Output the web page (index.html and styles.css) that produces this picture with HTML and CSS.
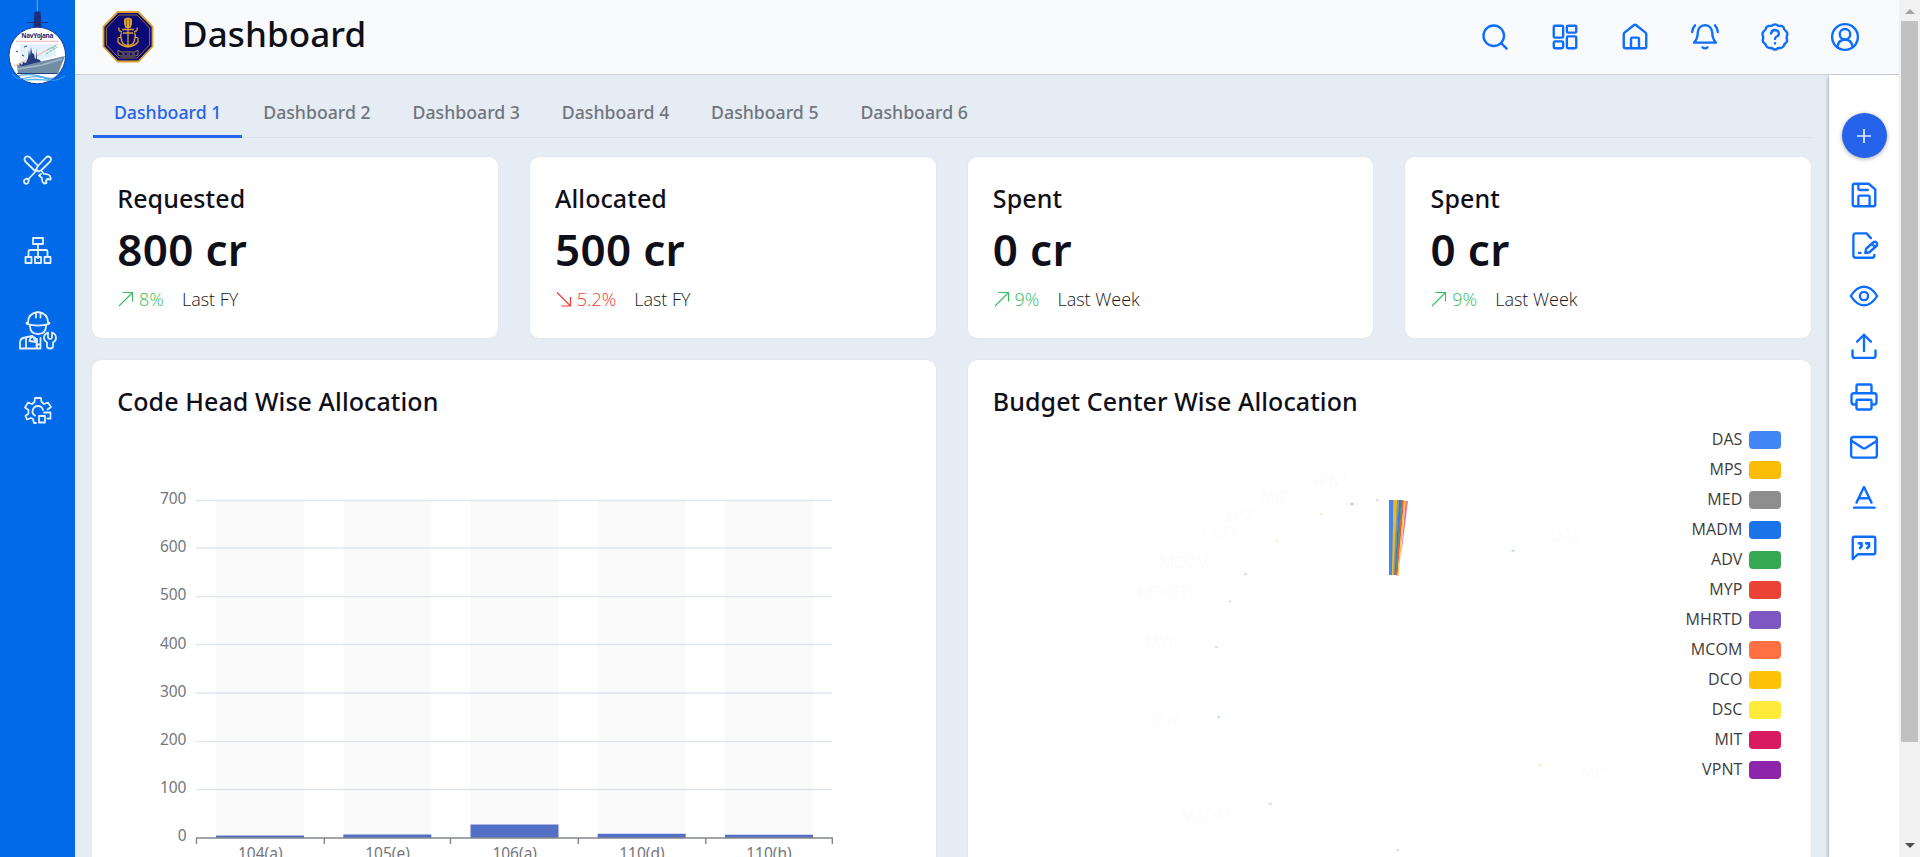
FILE: index.html
```html
<!DOCTYPE html>
<html lang="en">
<head>
<meta charset="utf-8">
<title>Dashboard</title>
<link rel="stylesheet" href="styles.css">
</head>
<body>
<div class="app">
  <aside class="sidebar">
    <svg class="brand" width="75" height="90" viewBox="0 0 75 90">
      <defs><clipPath id="disc"><circle cx="37.3" cy="55.5" r="28"/></clipPath></defs>
      <path d="M37.3 0v13" stroke="#7f9bc9" stroke-width="1"/>
      <path d="M35 12h5l1 15h-7zM27 22.5h21" fill="#1e2f7a" stroke="#1e2f7a" stroke-width="1"/>
      <circle cx="37.3" cy="55.5" r="28.3" fill="#fff" stroke="#1f3f96" stroke-width="1"/>
      <g clip-path="url(#disc)">
        <path d="M20 44h36v12l-36 10z" fill="#e2f1fb"/>
        <path d="M14 66L38 55 58 44" stroke="#f0b79a" fill="none"/>
        <path d="M46 54l11-7M47 50l9-4" stroke="#75cdb4" stroke-width="1.200" stroke-dasharray="3 1"/>
        <path d="M16 51l2 1M22 55l2 1M24 47l3-1" stroke="#315b9f" stroke-width="1.200"/>
        <path d="M18 68l2-5 2 2 1-3 3 1 2-5 1-8 1 6 1-9 1 6 2 1 1 5 1-1v-10l1 11 3 1 2 4-22 7z" fill="#243b7d"/>
        <path d="M17 65l6 1 20-5 22-5-7 18H18z" fill="#708da5"/>
        <path d="M18 69l24-4 20-6" stroke="#a5bac9" stroke-width="1.500" fill="none"/>
        <path d="M17 73.500h40" stroke="#243b7d" stroke-width="1.200"/>
        <path d="M14 77q15-5 28 0 12 4 22-3M18 81q16-3 36 0" stroke="#55aee9" stroke-width="1.500" fill="none"/>
      </g>
      <path d="M12 74q6 7 13 4 14-3 22 1 8 4 18-3" stroke="#3e9eee" fill="none"/>
      <text x="37.3" y="38.3" text-anchor="middle" textLength="32" class="brand-name">NavYojana</text>
      <path d="M16 41.3h43" stroke="#e99a9b" stroke-dasharray="2 .7"/>
    </svg>
    <nav class="side-nav">
      <svg width="30" height="30" viewBox="0 0 30 30"><path d="M12 16L2.300 6.500Q.5 4 2.500 2.200T7 2.400L15 11M15 11l8-8.500q2-1.800 4-.2t.2 4.200L18.500 15 15.500 16.500 13 14.500zM14 15L5 24.500M1.500 28q-1-2 0-3.300L4 23.500l2 1.700L5 28q-2 1.500-3.500 0zM18 19l-2 1.500 3 2.500q-.5 4 2 5.500l2.500-.5-.5-2.500 1.500-1.500 3 .5q.5-4-2.500-5t-4-.5L19 16.500"/></svg>
      <svg width="30" height="30" viewBox="0 0 30 30"><path d="M10 2h10v6H10zM15 8v14M5.500 21v-5.500q0-1.500 1.500-1.500h16q1.500 0 1.500 1.500V21M2.500 21h6v6h-6zM12 21h6v6h-6zM21.500 21h6v6h-6z"/></svg>
      <svg class="worker" width="40" height="40" viewBox="0 0 40 40"><path d="M10 12.500Q10 3.500 20 2q10 1.500 10 10.500M10 12q-3 1-.5 2.200Q20 17 30.500 14.200q2.500-1.200-.5-2.200M18 3V7.500M22.500 3V7.500M12 16q0 8 8 8t8-8M2 38.500V32Q2.500 28 7 27.500L14 26l4.500 3v9.500zM8 38.500V28M11.500 31q.5-3 3-5l3.500 6-6.500-1zM19 29v9.500h3.500v-4H19M22.500 28v7M30 22.500q-4.500 2-4 6 .5 2.500 3 4v4q0 2 3 2t3-2v-4q3-1.500 3-4.500 0-4-4-5.500v5q-.5 1.500-2 1.500t-2-1.500z"/></svg>
      <svg width="30" height="30" viewBox="0 0 30 30"><path d="M13 28h-2l-1-4-2-1-4 1.500L2.500 21l3-2.500v-3.500L2 12.500 5 7.500l4 1.500 2.500-2L12 3h6l.5 4 2.500 2L25 7.500l3 4.500-3.500 2.500M12 20.500q-3-1.500-2.500-4.500 1-5 5.500-5 4 0 5 4M16 21h6v6.500h-6zM21 17.500h6.500v6h-3"/></svg>
    </nav>
  </aside>
  <div class="main">
    <header class="header">
      <svg class="crest" width="52" height="52" viewBox="0 0 52 52">
        <path d="M15.700 1h20.600L50.500 15.500v20L36.300 50.500H15.700L1.500 35.500v-20z" fill="#0b0a76" stroke="#dba32c" stroke-width="1.800"/>
        <path d="M17 4h18l12.500 13v17L35 47H17L4.500 34V17z" fill="none" stroke="#ad8429" stroke-width=".8"/>
        <path d="M22 8q4-3 8 0v5l-1.500 4h-5L22 13z" fill="#d99f2b"/>
        <path d="M26 17v17M20 18.500h12M20 21q-4-1-3-4.500M32 21q4-1 3-4.500M16 27l3-1q0 8 7 8.500 7-.5 7-8.500l3 1M16 27v4q3 4 10 5 7-1 10-5v-4M20 22q-3 3 0 7M32 22q3 3 0 7M21 22h10" fill="none" stroke="#d99f2b" stroke-width="1.300"/>
        <path d="M24.500 8v7M27.500 8v7" stroke="#6b4a3a" stroke-width=".6"/>
        <path d="M16 39l3 2h14l3-2v5l-3 1H19l-3-1zM20 43h3M25 43h3M30 43h3" fill="none" stroke="#9c7838" stroke-width="1"/>
      </svg>
      <h1 class="title">Dashboard</h1>
      <div class="actions">
        <svg viewBox="0 0 24 24"><circle cx="11" cy="11" r="8.200"/><path d="M17 17l4.300 4.300"/></svg>
        <svg viewBox="0 0 24 24"><rect x="3" y="3" width="7.500" height="9.500" rx="1"/><rect x="13.500" y="3" width="7.500" height="5.500" rx="1"/><rect x="3" y="15.500" width="7.500" height="5.500" rx="1"/><rect x="13.500" y="11.500" width="7.500" height="9.500" rx="1"/></svg>
        <svg viewBox="0 0 24 24"><path d="M3 9.800q0-.8.600-1.300L11 2.600q1-.7 2 0l7.400 5.900q.6.500.6 1.300V19.500Q21 21 19.500 21h-15Q3 21 3 19.500zM8.800 21v-7.500q0-1 1-1h4.400q1 0 1 1V21"/></svg>
        <svg viewBox="0 0 24 24"><path d="M6.200 8.500Q6.700 3 12 2.500q5.300.5 5.800 6 0 4.500 2.900 8H3.300q2.900-3.500 2.900-8zM10 20.300q2 1.600 4 0M4 2.700Q2 4.800 1.800 8M20 2.700q2 2.100 2.200 5.300"/></svg>
        <svg viewBox="0 0 24 24"><path d="M12 1.900q1.600 0 2.600 1.200 1.500 0 3 .1 1.700.8 1.800 2.700.8 1 2 2.200 1 1.700 0 3.300-.3 1.200.2 2.600.4 1.900-1.400 3.100-1 1-1.400 2.400-1.200 1.500-3 1.300-1.300-.2-2.200.6Q12 22.800 10.400 21.400q-1-.7-2.300-.6-1.900.1-2.900-1.300-.5-1.400-1.500-2.400-1.800-1.200-1.400-3.100.5-1.400.1-2.600-.9-1.600.1-3.300 1.200-1.200 2-2.200.1-1.900 1.800-2.700 1.500-.1 3-.1Q10.400 1.900 12 1.900z"/><path d="M8.900 9.300q.2-2.800 3.100-2.900 3.100.3 3.100 2.900 0 1.600-1.700 2.300-1.400.6-1.400 1.900M12 17v.1"/></svg>
        <svg viewBox="0 0 24 24"><circle cx="12" cy="12" r="10.300"/><circle cx="12" cy="9.800" r="4.200"/><path d="M6 20q.5-5.800 6-6 5.500.2 6 6"/></svg>
      </div>
    </header>
    <div class="body">
      <main class="content">
        <nav class="tabs">
          <a class="tab tab-active">Dashboard 1</a><a class="tab">Dashboard 2</a><a class="tab">Dashboard 3</a><a class="tab">Dashboard 4</a><a class="tab">Dashboard 5</a><a class="tab">Dashboard 6</a>
        </nav>
        <section class="grid">
          <article class="card">
            <h2 class="card-title">Requested</h2><div class="value">800 cr</div>
            <div class="trend up"><svg viewBox="0 0 16 16"><path d="M1 15L14.500 1.500M4.500 1.500h10v9"/></svg><span class="pct">8%</span><span class="period">Last FY</span></div>
          </article>
          <article class="card">
            <h2 class="card-title">Allocated</h2><div class="value">500 cr</div>
            <div class="trend down"><svg viewBox="0 0 16 16"><path d="M1 1.500L14.500 15M5.500 15h9V6"/></svg><span class="pct">5.2%</span><span class="period">Last FY</span></div>
          </article>
          <article class="card">
            <h2 class="card-title">Spent</h2><div class="value">0 cr</div>
            <div class="trend up"><svg viewBox="0 0 16 16"><path d="M1 15L14.500 1.500M4.500 1.500h10v9"/></svg><span class="pct">9%</span><span class="period">Last Week</span></div>
          </article>
          <article class="card">
            <h2 class="card-title">Spent</h2><div class="value">0 cr</div>
            <div class="trend up"><svg viewBox="0 0 16 16"><path d="M1 15L14.500 1.500M4.500 1.500h10v9"/></svg><span class="pct">9%</span><span class="period">Last Week</span></div>
          </article>
          <article class="card panel">
            <h2 class="card-title">Code Head Wise Allocation</h2>
            <svg class="chart" width="791" height="440" viewBox="118 425 791 440">
              <path class="gridline" d="M196 500.500H832M196 548H832M196 596.700H832M196 644.500H832M196 693H832M196 741.700H832M196 789.500H832"/>
              <path class="band" d="M216 501h88v336h-88zM343.300 501h88v336h-88zM470.500 501h88v336h-88zM597.700 501h88v336h-88zM725 501h88v336h-88z"/>
              <path class="bar" d="M216 835.500h88v2.500h-88zM343.300 834.500h88v3.500h-88zM470.500 824.500h88V838h-88zM597.700 833.700h88v4.300h-88zM725 834.700h88v3.300h-88z"/>
              <path class="axis" d="M196 838H833M196.500 838v6M324.300 838v6M450.500 838v6M578.300 838v6M705.800 838v6M832.300 838v6"/>
              <g class="labels" text-anchor="end">
                <text x="186.500" y="504">700</text><text x="186.500" y="552">600</text><text x="186.500" y="600">500</text><text x="186.500" y="649">400</text><text x="186.500" y="697">300</text><text x="186.500" y="745">200</text><text x="186.500" y="793">100</text><text x="186.500" y="841">0</text>
              </g>
              <g class="labels" text-anchor="middle">
                <text x="260.300" y="859">104(a)</text><text x="387.500" y="859">105(e)</text><text x="514.700" y="859">106(a)</text><text x="641.900" y="859">110(d)</text><text x="769" y="859">110(h)</text>
              </g>
            </svg>
          </article>
          <article class="card panel">
            <h2 class="card-title">Budget Center Wise Allocation</h2>
            <div class="split">
              <svg class="pie" width="620" height="440" viewBox="993 425 620 440">
                <path d="M1389 500h5l-1.500 75h-3.500z" fill="#4285f4"/>
                <path d="M1393.500 500h4l-3 75h-2.500z" fill="#f5b915"/>
                <path d="M1397 500h2l-4 75h-1.500z" fill="#8e8e8e"/>
                <path d="M1399 500h2.500l-5.500 75h-1.500z" fill="#287fca"/>
                <path d="M1401 500h1.500l-6 75h-1.500z" fill="#48977b"/>
                <path d="M1402 500.500h2l-6.500 75h-1.500z" fill="#e35c3c"/>
                <path d="M1404 500.500h1.500l-7 75h-1z" fill="#ffc03a"/>
                <path d="M1405.500 501h2.500l-7.500 60z" fill="#dc7b9c"/>
                <g class="callouts">
                  <text x="1310" y="486">VPNT</text><text x="1260.500" y="503">MIT</text><text x="1227.500" y="521">DSC</text><text x="1202.600" y="538">DCO</text><text x="1160" y="568">MCOM</text><text x="1138.500" y="598">MHRTD</text><text x="1146" y="648">MYP</text><text x="1150" y="725">ADV</text><text x="1181" y="821">MADM</text><text x="1551" y="541">DAS</text><text x="1581" y="779">MPS</text>
                </g>
                <path d="M1511.500 550h3v1.500h-3zM1269 803h2.500v1.500h-2.500z" fill="#b5d2fa"/>
                <path d="M1538.500 764.500h2.500v1.500h-2.500zM1276 540h2v1.500h-2zM1320.500 513h2v1.500h-2z" fill="#fbdf9c"/>
                <path d="M1351 503h2v2h-2z" fill="#eb9ab8"/>
                <path d="M1376 499.500h2.500v1.500h-2.500z" fill="#dec3e6"/>
                <path d="M1244 573.500h3v1.500h-3zM1215 646.500h2.500v1.500h-2.500z" fill="#f9c3bd"/>
                <path d="M1229 600.500h2v1.500h-2zM1396.500 849.500h2.500v1.500h-2.500z" fill="#cfcfd6"/>
                <path d="M1218 716h1.500v2h-1.500z" fill="#a8dcc0"/>
              </svg>
              <ul class="legend">
                <li>DAS<i class="c1"></i></li><li>MPS<i class="c2"></i></li><li>MED<i class="c3"></i></li><li>MADM<i class="c4"></i></li><li>ADV<i class="c5"></i></li><li>MYP<i class="c6"></i></li><li>MHRTD<i class="c7"></i></li><li>MCOM<i class="c8"></i></li><li>DCO<i class="c9"></i></li><li>DSC<i class="c10"></i></li><li>MIT<i class="c11"></i></li><li>VPNT<i class="c12"></i></li>
              </ul>
            </div>
          </article>
        </section>
      </main>
      <aside class="tools">
        <button class="add"><svg viewBox="0 0 16 16"><path d="M8 1v14M1 8h14"/></svg></button>
        <div class="tool-list">
          <svg viewBox="0 0 24 24"><path d="M4.500 3h11.200L21 7.500v12q0 1.500-1.500 1.500h-15Q3 21 3 19.500v-15Q3 3 4.500 3zM7.500 3v4q0 1 1 1H15M7.500 21v-7.500q0-1 1-1h7q1 0 1 1V21"/></svg>
          <svg viewBox="0 0 24 24"><path d="M17.500 6.500L14 2.700H5.500Q3.500 2.700 3.500 4.700v15.500q0 2 2 2h13q1.800 0 1.800-1.800v-.4M8 18.300h1.200M13 18.500l.7-3.500 5.800-5.200q1.500-.8 2.500.3t.1 2.500L16.300 17.800zM18.300 11l2.400 2.500"/></svg>
          <svg viewBox="0 0 24 24"><path d="M1.500 12Q6 4.700 12 4.500q6 .2 10.500 7.500-4.500 7.300-10.500 7.500Q6 19.300 1.500 12z"/><circle cx="12" cy="12" r="3.300"/></svg>
          <svg viewBox="0 0 24 24"><path d="M12 16V3M6.500 8.500L12 3l5.500 5.500M2.800 15.500v4q0 2 2 2h14.400q2 0 2-2v-4"/></svg>
          <svg viewBox="0 0 24 24"><path d="M6 9V3q0-1 1-1h10q1 0 1 1v6M6 18H4q-2 0-2-2v-5q0-2 2-2h16q2 0 2 2v5q0 2-2 2h-2M7 14.200h10q1 0 1 1V21q0 1-1 1H7q-1 0-1-1v-5.800q0-1 1-1z"/></svg>
          <svg viewBox="0 0 24 24"><rect x="1.700" y="4" width="20.600" height="16.500" rx="2"/><path d="M2 7l9 5.800q1.200.6 2.400 0l9-5.800"/></svg>
          <svg viewBox="0 0 24 24"><path d="M6 16.500L12 4l6 12.500M8 13h8M4 20.500h16.500"/></svg>
          <svg viewBox="0 0 24 24"><path d="M3 21V4.500Q3 3 4.500 3h15Q21 3 21 4.500v11q0 1.500-1.500 1.500H7z"/><path d="M8 8.200h2v2.500L8.800 12M13.800 8.200h2.200v2.500L14.700 12" stroke-width="2.200"/></svg>
        </div>
      </aside>
    </div>
  </div>
  <div class="scrollbar"><b class="arrow-up"></b><div class="thumb"></div><b class="arrow-down"></b></div>
</div>
</body>
</html>
```
FILE: styles.css
```css
* { box-sizing: border-box; }
body { margin: 0; font-family: "Noto Sans", "Open Sans", sans-serif; color: #0f0f19; }
.app { display: flex; width: 1920px; height: 857px; overflow: hidden; background: #e5ecf4; }
svg { display: block; flex: none; }

.sidebar { width: 75px; background: #006ae8; flex: none; }
.brand-name { font: 700 6.4px "Noto Sans", sans-serif; fill: #18236e; }
.side-nav { display: flex; flex-direction: column; align-items: center; padding-top: 65px; gap: 50.500px; }
.side-nav svg { fill: none; stroke: #e6eefa; stroke-width: 1.800; stroke-linejoin: round; stroke-linecap: round; }
.side-nav .worker { margin: -6px 0 -6px; }

.main { flex: 1; display: flex; flex-direction: column; min-width: 0; }
.header { height: 75px; flex: none; display: flex; align-items: center; background: #f8fafc; border-bottom: 1px solid #ccd0d7; padding: 0 39px 0 27px; }
.title { margin: 0 auto 0 28px; font-size: 35px; font-weight: 500; line-height: 48px; letter-spacing: .1px; padding-bottom: 7px; }
.actions { display: flex; gap: 40px; }
.actions svg, .tool-list svg { width: 30px; height: 30px; fill: none; stroke: #0d6efd; stroke-width: 1.900; stroke-linecap: round; stroke-linejoin: round; }

.body { flex: 1; display: flex; min-height: 0; }
.content { flex: 1; min-width: 0; padding: 0 18px 0 17px; overflow: hidden; }
.tabs { display: flex; height: 63px; margin-left: 1px; border-bottom: 1px solid #dcdfe6; }
.tab { width: 149.300px; height: 63px; padding-top: 22px; text-align: center; font-size: 17.700px; line-height: 30px; font-weight: 500; color: #71757c; }
.tab-active { color: #2563eb; border-bottom: 3px solid #2563eb; border-radius: 2px 2px 0 0; }
.grid { display: grid; grid-template-columns: repeat(4, 1fr); column-gap: 32px; row-gap: 22px; padding-top: 19px; }
.card { min-width: 0; height: 181px; background: #fff; border-radius: 9px; padding: 25px 26px 25px 25.300px; box-shadow: 0 0 1px #c9ced6; }
.card-title { margin: 0; font-size: 25px; font-weight: 500; line-height: 32px; letter-spacing: .08px; }
.value { font-size: 44px; font-weight: 600; line-height: 60px; letter-spacing: .3px; margin-top: 5px; }
.trend { display: flex; align-items: center; height: 30px; margin: 5px 0 0 .8px; font: 350 18px/30px "Open Sans", sans-serif; }
.trend svg { width: 16px; height: 16px; margin-right: 5px; fill: none; stroke: currentColor; stroke-width: 1.100; }
.up { color: #35bb5c; }
.down { color: #f8342f; }
.period { margin-left: 18px; color: #181820; }
.panel { grid-column: span 2; height: 560px; }
.chart { margin: 8px 0 0 .7px; }
.gridline { stroke: #e0e6f1; stroke-width: 1.300; }
.band { fill: rgba(180, 180, 180, .07); }
.bar { fill: #5470c6; }
.axis { stroke: #83868f; stroke-width: 1.400; fill: none; }
.labels { font-size: 15.500px; fill: #74767e; }

.split { display: flex; justify-content: space-between; }
.pie { margin: 8px 0 0 .7px; }
.callouts { font: 300 16px "Open Sans", sans-serif; fill: #fbfbfb; }
.legend { list-style: none; margin: 7px 4px 0 0; padding: 0; font: 375 16px "Open Sans", sans-serif; letter-spacing: .1px; color: #3c3c3c; }
.legend li { display: flex; justify-content: flex-end; align-items: center; height: 30px; gap: 6.500px; }
.legend i { width: 32px; height: 18px; border-radius: 4px; position: relative; top: 1px; }
.c1 { background: #4285f4; }
.c2 { background: #fbbc05; }
.c3 { background: #8e8e8e; }
.c4 { background: #1a73e8; }
.c5 { background: #34a853; }
.c6 { background: #ea4335; }
.c7 { background: #7e57c2; }
.c8 { background: #ff7043; }
.c9 { background: #ffc107; }
.c10 { background: #ffeb3b; }
.c11 { background: #d81b60; }
.c12 { background: #8e24aa; }

.tools { width: 70px; flex: none; background: #fff; box-shadow: -1px 2px 3px rgba(70, 80, 100, .4); padding-top: 38px; display: flex; flex-direction: column; align-items: center; }
.add { width: 45px; height: 45px; flex: none; border: 0; border-radius: 50%; background: #2563eb; box-shadow: 0 1px 4px rgba(0, 0, 0, .35); display: flex; align-items: center; justify-content: center; padding: 0; }
.add svg { width: 16px; height: 16px; stroke: #e8eeff; stroke-width: 1.700; }
.tool-list { display: flex; flex-direction: column; gap: 20.400px; margin-top: 22px; }

.scrollbar { width: 21px; flex: none; background: #f1f1f1; display: flex; flex-direction: column; align-items: center; padding-top: 9px; }
.arrow-up { border: 5px solid transparent; border-top: 0; border-bottom-color: #a3a3a3; }
.arrow-down { border: 5px solid transparent; border-bottom: 0; border-top-color: #505050; margin-top: auto; margin-bottom: 9px; }
.thumb { width: 17px; height: 721px; margin-top: 7px; background: #c1c1c1; }
```
